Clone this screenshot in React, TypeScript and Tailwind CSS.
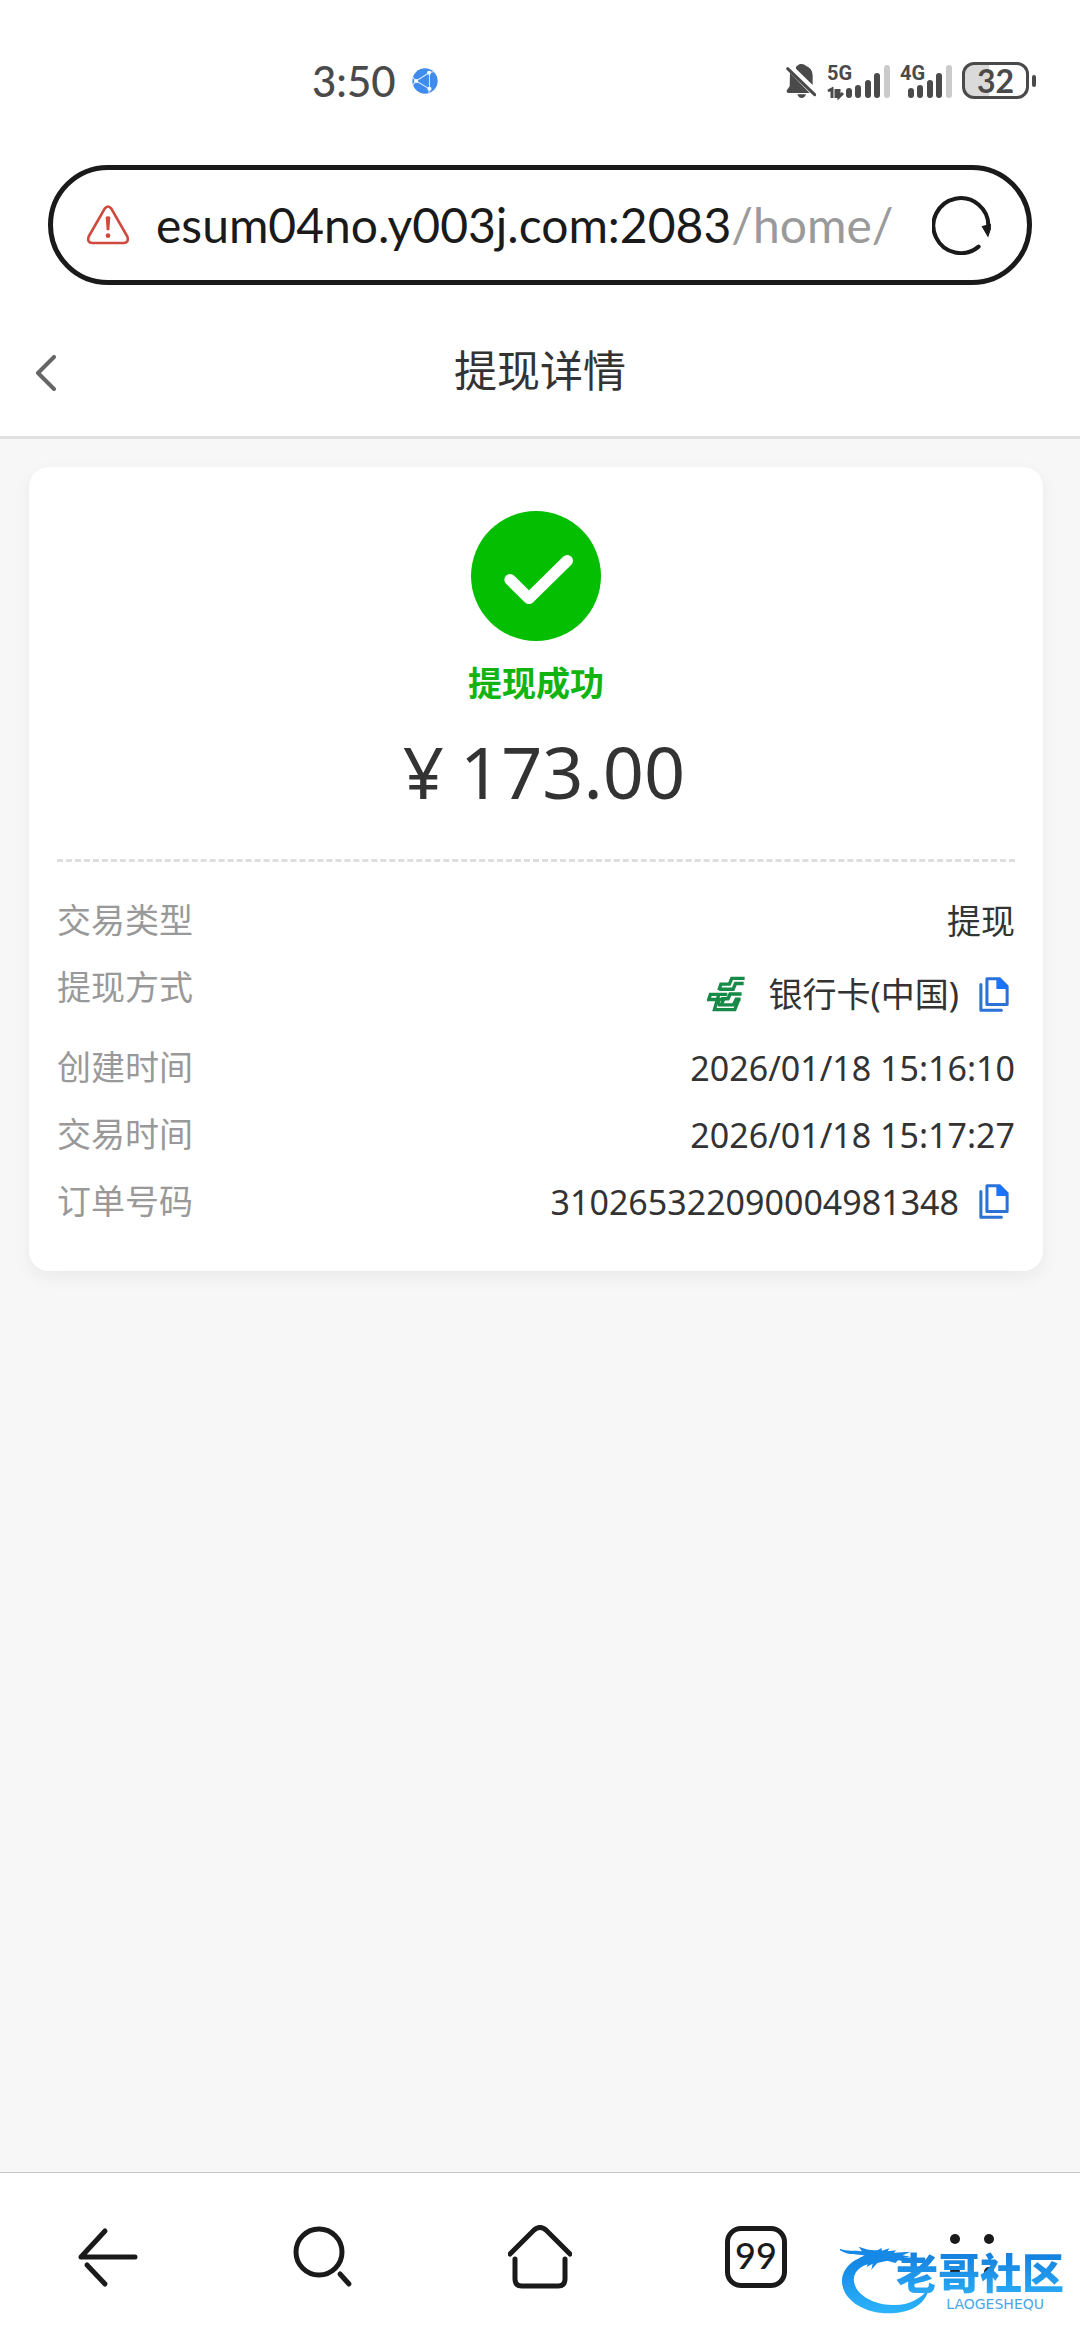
import React from "react";

const details = [
  { label: "交易类型", value: "提现" },
  { label: "提现方式", value: "银行卡(中国)", bank: true, copy: true },
  { label: "创建时间", value: "2026/01/18 15:16:10" },
  { label: "交易时间", value: "2026/01/18 15:17:27" },
  { label: "订单号码", value: "310265322090004981348", copy: true },
];

function GlobeIcon() {
  return (
    <svg viewBox="0 0 76 76" className="size-[26px]" aria-hidden="true">
      <circle cx="38" cy="38" r="37" fill="#3f8cec" />
      <g stroke="#d8eaff" strokeWidth="3" fill="none">
        <path d="M12 38 51 13M12 38l39 23M51 13v48M51 13l15-3M12 38 1 26M12 38 2 50M51 61l-2 14" />
      </g>
      <g fill="#fff">
        <circle cx="12" cy="38" r="6" />
        <circle cx="50" cy="14" r="6" />
        <circle cx="51" cy="61" r="6" />
      </g>
    </svg>
  );
}

function MutedBellIcon() {
  return (
    <svg viewBox="0 0 90 102" className="h-[34px] w-[30px]" aria-hidden="true">
      <path
        fill="#4a4a4a"
        d="M30 8C36 5 37 0 46 0s11 4 16 7c13 6 18 16 18 30v26L30 14ZM12 26l59 61H8c-5 0-8-5-5-9l8-11Z"
      />
      <path fill="#4a4a4a" d="M34 91h26c-2 7-7 11-13 11s-11-4-13-11Z" />
      <path d="M5 14 86 92" stroke="#4a4a4a" strokeWidth="9" strokeLinecap="round" />
    </svg>
  );
}

function SignalIcon({ name, data }: { name: string; data?: boolean }) {
  return (
    <svg
      viewBox={data ? "0 -8 64 50" : "12 -8 52 50"}
      className={data ? "h-[50px] w-16" : "h-[50px] w-[52px]"}
      role="img"
      aria-label={name}
    >
      <g strokeWidth="6" strokeLinecap="round" stroke="#4a4a4a">
        <path d="M23 27v4M32 24v7M42 19v12M51 12v19" />
        <path d="M61 4v27" stroke="#cbcbcb" />
      </g>
      {data && (
        <path d="M2 27l4-2v9M10 25v9M13 25v8l4-4" stroke="#4a4a4a" strokeWidth="3" fill="none" />
      )}
      <text
        x={data ? 1 : 12}
        y="16"
        fontSize="20"
        fontWeight="700"
        fill="#4a4a4a"
        fontFamily="Roboto, sans-serif"
      >
        {name}
      </text>
    </svg>
  );
}

function WarningIcon() {
  return (
    <svg viewBox="0 0 132 120" className="h-10 w-11 shrink-0" aria-hidden="true">
      <path
        d="M56 11Q66-2 76 11L124 95Q130 112 114 114H18Q2 112 8 95Z"
        fill="none"
        stroke="#cf4a3d"
        strokeWidth="8"
      />
      <path d="M59 36q7-5 14 0l-3 40h-8Z" fill="#cf4a3d" />
      <circle cx="66" cy="92" r="7" fill="#cf4a3d" />
    </svg>
  );
}

function ReloadIcon() {
  return (
    <svg viewBox="0 0 176 176" className="size-[59px]" aria-hidden="true">
      <path
        d="M168 92A82 82 0 1 0 139 151"
        fill="none"
        stroke="#1a1a1a"
        strokeWidth="12"
        strokeLinecap="round"
      />
      <path d="M150 91l24-6v14l-7 21Z" fill="#1a1a1a" stroke="#1a1a1a" strokeWidth="3" />
    </svg>
  );
}

function BankIcon() {
  return (
    <svg viewBox="66 60 112 106" className="h-9 w-[38px]" aria-hidden="true">
      <g fill="none" stroke="#178a48" strokeWidth="10">
        <path d="M177 67h-38l-7 17h-25l-6 18" />
        <path d="M174 82h-24l-7 17h-41" />
        <path d="M168 113h-34l-6 14h-20" />
        <path d="M126 114H76l-5 15h44l-6 14" />
        <path d="M165 128h-13l-8 17h-42l-4-14" />
        <path d="M160 128l-12 31H88l12-42" />
      </g>
    </svg>
  );
}

function CopyIcon() {
  return (
    <svg viewBox="0 0 88 104" className="h-[35px] w-[30px]" aria-hidden="true">
      <g fill="none" stroke="#2b72d6" strokeWidth="9" strokeLinejoin="round" strokeLinecap="round">
        <path d="M23 5h37l23 23v54H23Z" />
        <path d="M5 22v77h61" />
      </g>
      <path d="M51 4h10l23 24v8H51Z" fill="#1a73f8" />
    </svg>
  );
}

function NavButton({ label, children }: { label: string; children: React.ReactNode }) {
  return (
    <button type="button" aria-label={label} className="flex h-full flex-1 items-center justify-center">
      {children}
    </button>
  );
}

function Watermark() {
  return (
    <div className="pointer-events-none absolute right-4 bottom-7 h-[76px] w-[224px]">
      <svg viewBox="0 0 270 210" className="absolute top-2 left-0 h-[70px] w-[90px]" aria-hidden="true">
        <defs>
          <linearGradient id="dragon" x1="0" y1="0" x2="0" y2="1">
            <stop offset="0" stopColor="#1180e0" />
            <stop offset="1" stopColor="#2bb4fb" />
          </linearGradient>
        </defs>
        <path
          fill="url(#dragon)"
          d="M100 30C46 38 5 70 6 113c2 54 64 95 139 95 62 0 112-24 122-76-24 34-66 54-111 51-63-2-109-34-114-70-5-34 26-52 68-60Z"
        />
        <path
          fill="#1688e5"
          d="M0 14c22 9 42 4 66 8L56 8c24 9 40 12 58 10l10-6 2 8 22-7-5 9 25-3-6 7 50-3-24 11 22 4-20 4 20 12-36-5-8 8-24-7-30 7-18 20 4-18-18 10 6-18c-10 2-28 2-46 12 8-14 20-24 34-28-20-6-48 2-74-16Z"
        />
      </svg>
      <div className="absolute right-0 bottom-[18px] bg-linear-to-b from-[#157fdd] to-[#2aa9f5] bg-clip-text text-[42px] leading-[42px] font-black text-transparent">
        老哥社区
      </div>
      <div className="absolute right-5 bottom-0 font-['DejaVu_Sans'] text-[14px] leading-4 text-[#4aa6e8]">
        LAOGESHEQU
      </div>
    </div>
  );
}

export default function App() {
  return (
    <div className="relative flex min-h-screen flex-col bg-white font-[Lato,'Noto_Sans_CJK_SC',sans-serif] text-[#333]">
      <div className="flex h-[165px] items-center justify-between pr-11 pb-1 pl-[312px]">
        <div className="flex items-center gap-4">
          <span className="text-[42px] leading-none font-medium text-[#4a4a4a]">3:50</span>
          <GlobeIcon />
        </div>
        <div className="flex items-center gap-[10px]">
          <MutedBellIcon />
          <SignalIcon name="5G" data />
          <SignalIcon name="4G" />
          <div className="flex items-center gap-[3px]">
            <div className="flex h-[37px] w-[67px] items-center justify-center rounded-xl border-3 border-[#4a4a4a] bg-linear-to-r from-[#dadada] from-40% to-white to-40% text-[32px] leading-none font-bold text-[#4a4a4a]">
              32
            </div>
            <div className="h-3 w-1 rounded-sm bg-[#4a4a4a]" />
          </div>
        </div>
      </div>

      <div className="mx-12 flex h-[120px] items-center rounded-full border-5 border-[#1a1a1a] pr-9 pl-[33px]">
        <WarningIcon />
        <button
          type="button"
          aria-label="地址栏"
          className="ml-[26px] min-w-0 flex-1 overflow-hidden text-left text-[48px] leading-[64px] whitespace-nowrap text-[#1a1a1a]"
        >
          esum04no.y003j.com:2083<span className="text-[#9a9a9a]">/home/</span>
        </button>
        <button type="button" aria-label="刷新" className="ml-8 shrink-0">
          <ReloadIcon />
        </button>
      </div>

      <header className="mt-6 grid h-[130px] grid-cols-3 items-center border-b-3 border-[#e0e0e0] px-[34px]">
        <button type="button" aria-label="返回" className="justify-self-start">
          <svg viewBox="0 0 24 36" className="h-9 w-6" aria-hidden="true">
            <path
              d="M20 2 4 18l16 16"
              fill="none"
              stroke="#666"
              strokeWidth="4"
              strokeLinecap="round"
              strokeLinejoin="round"
            />
          </svg>
        </button>
        <h1 className="pb-1 text-center text-[43px] leading-[60px]">提现详情</h1>
      </header>

      <main className="flex-1 bg-[#f7f7f7] pt-7 pr-[37px] pl-[29px] font-['Noto_Sans','Noto_Sans_CJK_SC',sans-serif]">
        <section className="rounded-[20px] bg-white px-7 pt-11 pb-9 shadow-[0_6px_18px_rgba(0,0,0,0.06)]">
          <div className="flex flex-col items-center">
            <svg viewBox="0 0 390 390" className="size-[130px]" aria-hidden="true">
              <circle cx="195" cy="195" r="195" fill="#04be02" />
              <path
                d="M117 206l57 56L289 149"
                fill="none"
                stroke="#fff"
                strokeWidth="34"
                strokeLinecap="round"
                strokeLinejoin="round"
              />
            </svg>
            <p className="mt-[18px] text-[34px] leading-[48px] font-bold text-[#12b412]">提现成功</p>
            <p className="mt-6 flex gap-4 pl-4 text-[72px] leading-[80px]">
              <span>¥</span>
              <span>173.00</span>
            </p>
          </div>
          <hr className="mt-12 mb-[25px] border-t-3 border-dashed border-[#dedede]" />
          <dl className="text-[34px] leading-[48px]">
            {details.map((row) => (
              <div
                key={row.label}
                className={
                  row.bank
                    ? "flex h-20 items-start justify-between"
                    : "flex h-[67px] items-start justify-between"
                }
              >
                <dt className="py-[9px] text-[#999]">{row.label}</dt>
                <dd className="flex h-full items-center">
                  {row.bank && (
                    <span className="mr-6">
                      <BankIcon />
                    </span>
                  )}
                  <span>{row.value}</span>
                  {row.copy && (
                    <button type="button" aria-label={"复制" + row.label} className="mr-[6px] ml-5">
                      <CopyIcon />
                    </button>
                  )}
                </dd>
              </div>
            ))}
          </dl>
        </section>
      </main>

      <nav className="flex h-[168px] border-t border-[#c4c4c4] bg-white text-[#1a1a1a]">
        <NavButton label="后退">
          <svg viewBox="0 0 64 64" className="size-16" fill="none" stroke="currentColor" strokeWidth="5" strokeLinecap="round">
            <path d="M5 32h54M5 32 29 6" />
            <path d="M11 40l18 19" />
          </svg>
        </NavButton>
        <NavButton label="搜索">
          <svg viewBox="0 0 64 64" className="size-16" fill="none" stroke="currentColor" strokeWidth="5" strokeLinecap="round">
            <circle cx="27" cy="27" r="23" />
            <path d="M48 49l9 10" />
          </svg>
        </NavButton>
        <NavButton label="主页">
          <svg viewBox="0 0 64 64" className="size-16" fill="none" stroke="currentColor" strokeWidth="5" strokeLinecap="round">
            <path d="M2 29 26 5q6-5 12 0l24 24" />
            <path d="M7 34v20q0 7 7 7h36q7 0 7-7V34" />
          </svg>
        </NavButton>
        <NavButton label="标签页">
          <span className="flex size-[62px] items-center justify-center rounded-[16px] border-5 border-current pb-1 text-[36px] leading-none font-medium">
            99
          </span>
        </NavButton>
        <NavButton label="菜单">
          <svg viewBox="0 0 64 64" className="size-16" fill="currentColor">
            <circle cx="15" cy="14" r="5" />
            <circle cx="49" cy="14" r="5" />
            <circle cx="15" cy="47" r="5" />
            <circle cx="49" cy="47" r="5" />
          </svg>
        </NavButton>
      </nav>
      <Watermark />
    </div>
  );
}
